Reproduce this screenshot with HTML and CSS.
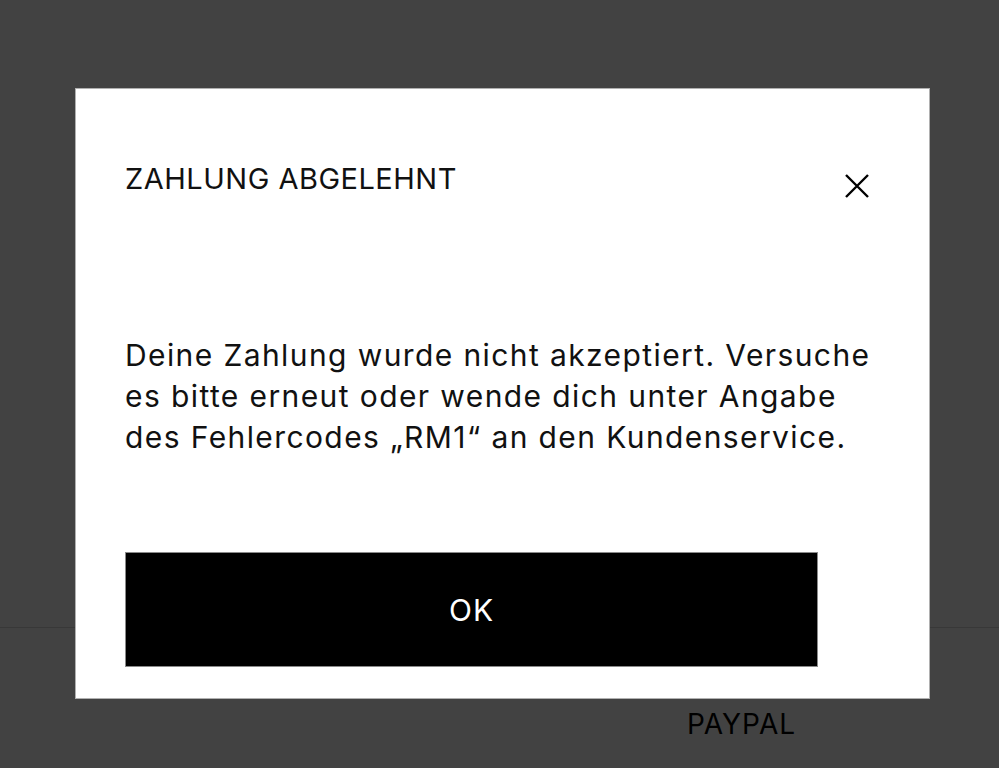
FILE: index.html
```html
<!DOCTYPE html>
<html lang="de">
<head>
<meta charset="utf-8">
<title>Zahlung abgelehnt</title>
<link rel="stylesheet" href="styles.css">
</head>
<body>
<div class="page">
  <div class="divider"></div>
  <div class="methods">
    <span class="method"></span>
    <span class="method paypal">PAYPAL</span>
  </div>
</div>
<div class="overlay">
  <div class="modal" role="dialog" aria-labelledby="dlg-title">
    <div class="modal-header">
      <h2 class="modal-title" id="dlg-title">ZAHLUNG ABGELEHNT</h2>
      <button class="close" aria-label="Schließen">
        <svg width="24" height="24" viewBox="0 0 24 24"><path d="M1 1 L23 23 M23 1 L1 23" stroke="#000" stroke-width="2.4" fill="none"/></svg>
      </button>
    </div>
    <p class="modal-text">Deine Zahlung wurde nicht akzeptiert. Versuche es bitte erneut oder wende dich unter Angabe des Fehlercodes „RM1“ an den Kundenservice.</p>
    <button class="ok">OK</button>
  </div>
</div>
</body>
</html>
```
FILE: styles.css
```css
html, body {
  margin: 0;
  padding: 0;
  background: #ffffff;
  font-family: Inter, "Liberation Sans", Arial, sans-serif;
}
.page {
  height: 768px;
  padding-top: 627px;
  box-sizing: border-box;
}
.divider {
  height: 1px;
  background: #d6d6d6;
}
.methods {
  display: grid;
  grid-template-columns: 687px 1fr;
  padding-top: 80px;
}
.method.paypal {
  font-size: 28px;
  line-height: 32px;
  color: #000;
  letter-spacing: 1px;
}
.overlay {
  position: fixed;
  inset: 0;
  background: rgba(0, 0, 0, 0.74);
  display: flex;
  align-items: flex-start;
  justify-content: flex-start;
  padding: 88px 0 0 75px;
  box-sizing: border-box;
}
.modal {
  width: 855px;
  box-sizing: border-box;
  background: #fff;
  border: 1px solid #b0b0b0;
  padding: 72px 60px 31px 49px;
  display: flex;
  flex-direction: column;
}
.modal-header {
  display: flex;
  justify-content: space-between;
  align-items: flex-start;
}
.modal-title {
  margin: 0;
  font-size: 29px;
  line-height: 36px;
  font-weight: 400;
  color: #111;
  letter-spacing: 0.5px;
}
.close {
  margin: 13px 0 0 0;
  padding: 0;
  border: 0;
  background: none;
  width: 24px;
  height: 24px;
  cursor: pointer;
  display: block;
}
.close svg { display: block; }
.modal-text {
  margin: 137px -18px 0 0;
  font-size: 30px;
  line-height: 41px;
  color: #111;
  letter-spacing: 1.4px;
}
.ok {
  margin-top: 94px;
  width: 693px;
  height: 115px;
  background: #000;
  color: #fff;
  border: 1px solid #8a8a8a;
  font-family: Inter, "Liberation Sans", Arial, sans-serif;
  font-size: 30px;
  letter-spacing: 1px;
  padding: 0;
  cursor: pointer;
}
```
